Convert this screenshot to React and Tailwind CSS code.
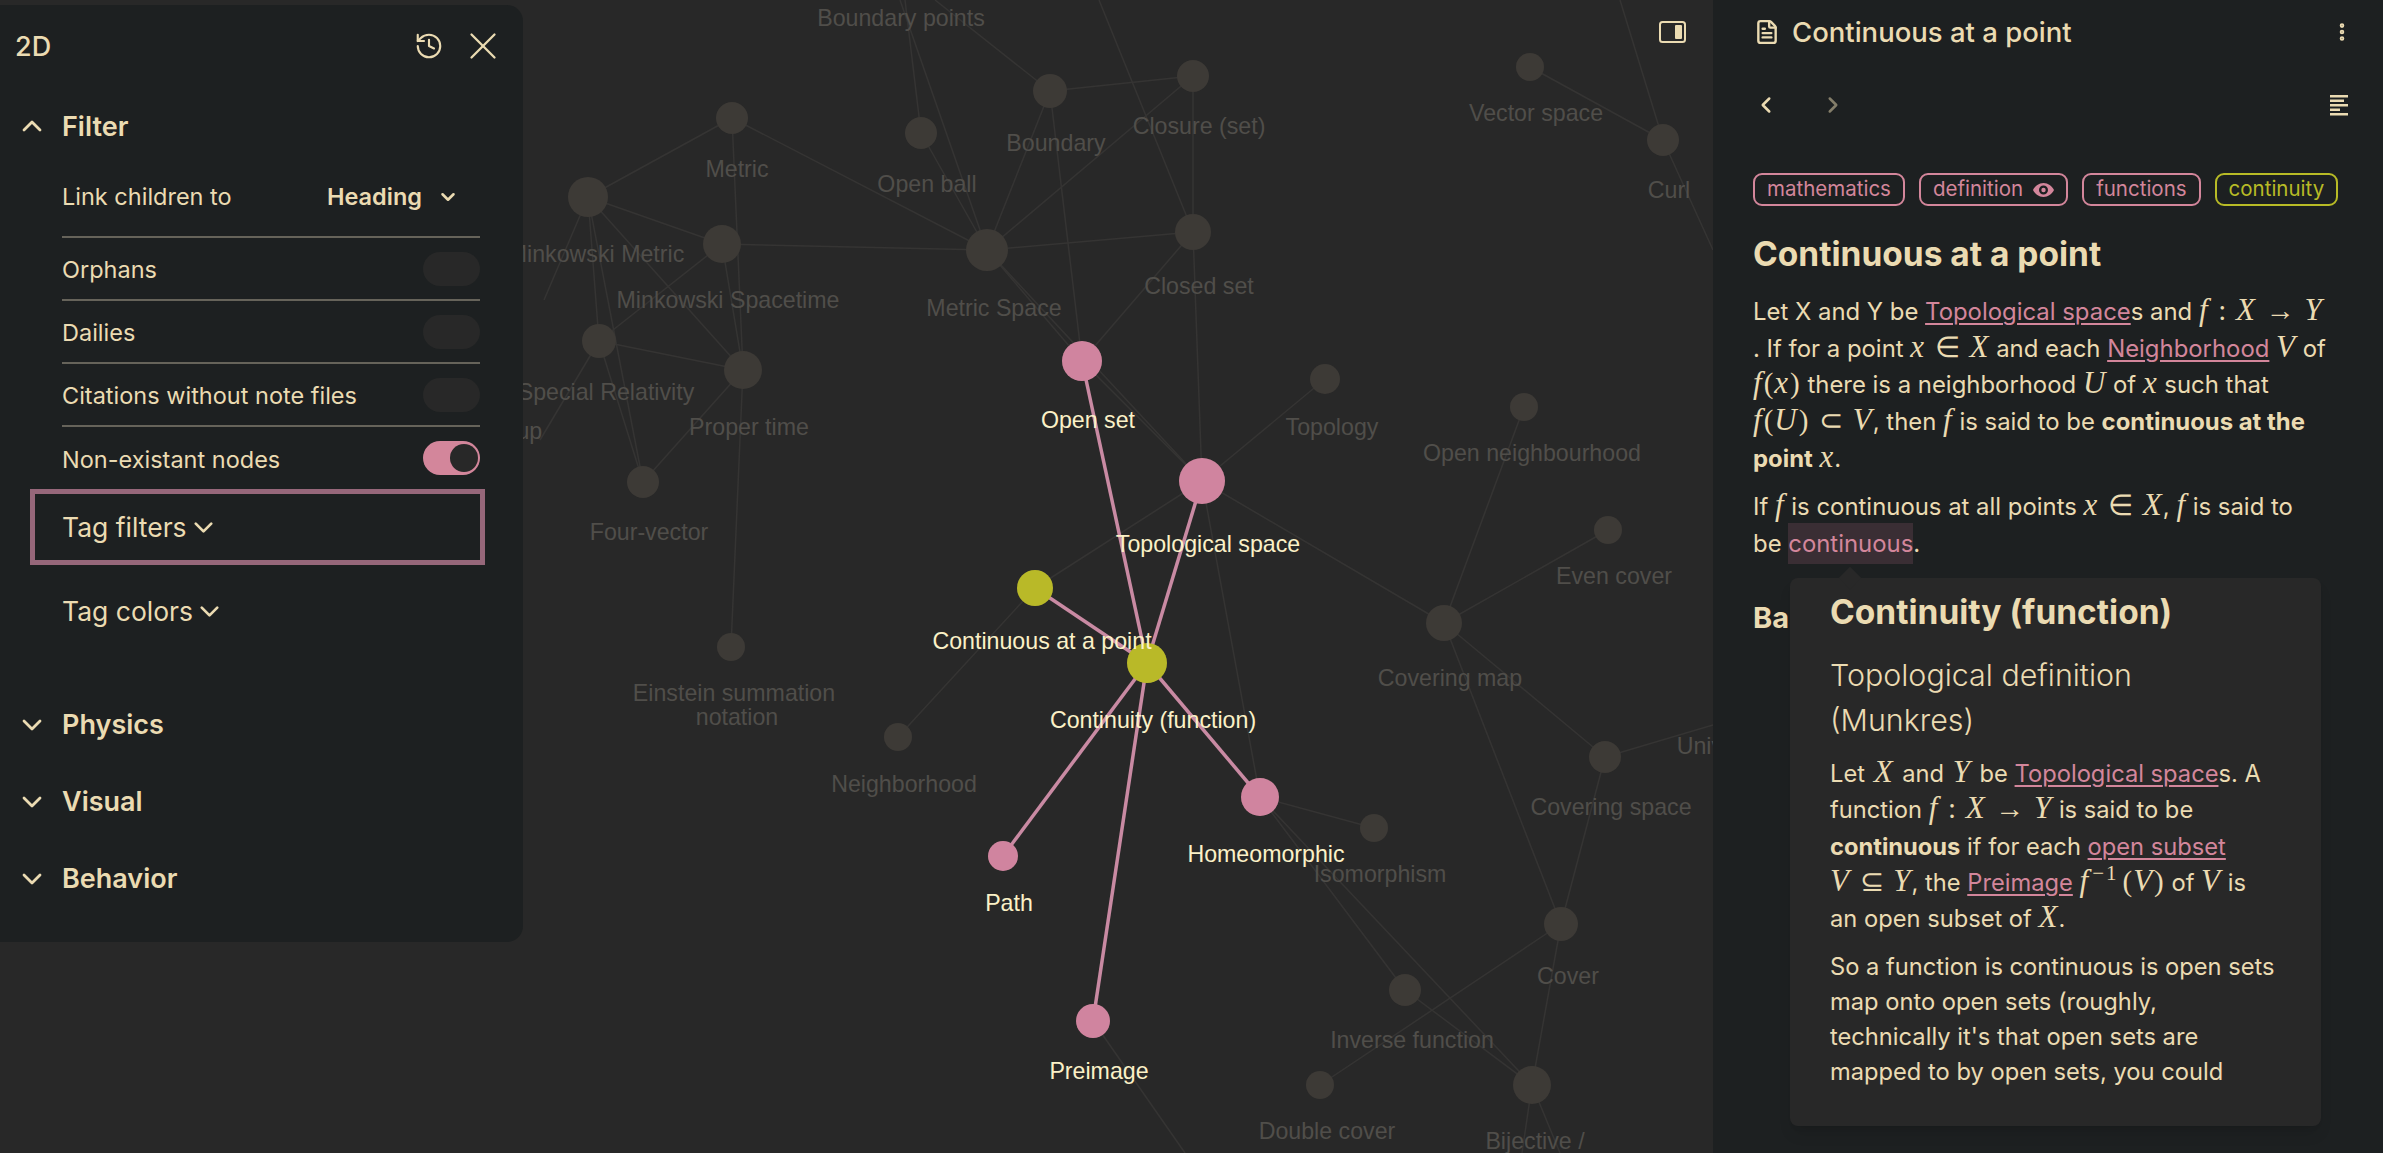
import {
    ChevronDown,
    ChevronLeft,
    ChevronRight,
    ChevronUp,
    EllipsisVertical,
    FileText,
    History,
    X,
} from 'lucide-react'

const nodes = {
    metric: [732, 118, 16],
    minkMetric: [588, 197, 20],
    minkSpace: [722, 244, 19],
    specialRel: [599, 341, 17],
    properTime: [743, 370, 19],
    fourVector: [643, 482, 16],
    einstein: [731, 647, 14],
    openBall: [921, 133, 16],
    boundary: [1050, 91, 17],
    closure: [1193, 76, 16],
    metricSpace: [987, 250, 21],
    closedSet: [1193, 232, 18],
    openSet: [1082, 361, 20],
    topSpace: [1202, 481, 23],
    topology: [1325, 379, 15],
    contPoint: [1035, 588, 18],
    continuity: [1147, 663, 20],
    neighborhood: [898, 737, 14],
    homeo: [1260, 797, 19],
    iso: [1374, 828, 14],
    path: [1003, 856, 15],
    preimage: [1093, 1021, 17],
    coveringMap: [1444, 623, 18],
    openNbhd: [1524, 407, 14],
    evenCover: [1608, 530, 14],
    coveringSpace: [1605, 757, 16],
    cover: [1561, 924, 17],
    inverse: [1405, 990, 16],
    doubleCover: [1320, 1085, 14],
    bijective: [1532, 1085, 19],
    vectorSpace: [1530, 67, 14],
    curl: [1663, 140, 16],
}

const pinkNodes = ['openSet', 'topSpace', 'homeo', 'path', 'preimage']
const limeNodes = ['contPoint', 'continuity']

const edges = [
    ['metric', 'minkMetric'], ['metric', 'metricSpace'], ['metric', 'properTime'],
    ['minkMetric', 'minkSpace'], ['minkMetric', 'specialRel'], ['minkMetric', 'properTime'],
    ['minkMetric', 'fourVector'], ['minkSpace', 'metricSpace'], ['minkSpace', 'specialRel'],
    ['minkSpace', 'properTime'], ['specialRel', 'properTime'], ['specialRel', 'fourVector'],
    ['properTime', 'fourVector'], ['properTime', 'einstein'], ['openBall', 'metricSpace'],
    ['boundary', 'closure'], ['boundary', 'metricSpace'], ['boundary', 'openSet'],
    ['closure', 'metricSpace'], ['closure', 'closedSet'], ['closedSet', 'metricSpace'],
    ['closedSet', 'openSet'], ['closedSet', 'topSpace'], ['metricSpace', 'openSet'],
    ['metricSpace', 'topSpace'], ['openSet', 'topSpace'], ['topology', 'topSpace'],
    ['topSpace', 'coveringMap'], ['topSpace', 'contPoint'], ['topSpace', 'homeo'],
    ['contPoint', 'neighborhood'], ['homeo', 'iso'], ['homeo', 'bijective'],
    ['homeo', 'inverse'], ['inverse', 'bijective'], ['cover', 'doubleCover'],
    ['cover', 'bijective'], ['cover', 'coveringSpace'], ['cover', 'coveringMap'],
    ['coveringMap', 'openNbhd'], ['coveringMap', 'evenCover'], ['coveringMap', 'coveringSpace'],
    ['vectorSpace', 'curl'],
]

// edges that run off the canvas
const looseEdges = [
    [905, 0, 921, 133], [900, 0, 987, 250], [935, 0, 1050, 91], [1099, 0, 1193, 232],
    [1620, 0, 1663, 140], [1663, 140, 1713, 250], [1605, 757, 1713, 725], [544, 300, 588, 197],
    [1532, 1085, 1522, 1153], [1532, 1085, 1560, 1153], [1093, 1021, 1185, 1153],
    [540, 440, 599, 341],
]

const pinkEdges = ['openSet', 'topSpace', 'contPoint', 'path', 'homeo', 'preimage']

const labels = [
    ['Boundary points', 901, 18], ['Metric', 737, 169], ['Minkowski Metric', 596, 254],
    ['Boundary', 1056, 143], ['Closure (set)', 1199, 126], ['Open ball', 927, 184],
    ['Metric Space', 994, 308], ['Closed set', 1199, 286], ['Minkowski Spacetime', 728, 300],
    ['Special Relativity', 606, 392], ['Proper time', 749, 427], ['Group', 510, 431],
    ['Four-vector', 649, 532], ['Einstein summation', 734, 693], ['notation', 737, 717],
    ['Neighborhood', 904, 784], ['Topology', 1332, 427], ['Open neighbourhood', 1532, 453],
    ['Even cover', 1614, 576], ['Covering map', 1450, 678], ['Covering space', 1611, 807],
    ['Isomorphism', 1380, 874], ['Cover', 1568, 976], ['Inverse function', 1412, 1040],
    ['Double cover', 1327, 1131], ['Bijective /', 1535, 1141], ['Vector space', 1536, 113],
    ['Curl', 1669, 190], ['Universal', 1725, 746],
]

const brightLabels = [
    ['Open set', 1088, 420], ['Topological space', 1208, 544], ['Continuous at a point', 1042, 641],
    ['Continuity (function)', 1153, 720], ['Homeomorphic', 1266, 854], ['Path', 1009, 903],
    ['Preimage', 1099, 1071],
]

function GraphCanvas() {
    return (
        <svg
            className="absolute inset-0 h-full w-full"
            viewBox="0 0 1713 1153"
            fontFamily="'Liberation Sans', Arial, sans-serif"
            fontSize="23.2"
            textAnchor="middle"
        >
            {edges.map(([a, b]) => (
                <line
                    key={a + b}
                    x1={nodes[a][0]}
                    y1={nodes[a][1]}
                    x2={nodes[b][0]}
                    y2={nodes[b][1]}
                    stroke="#353433"
                    strokeWidth="1.5"
                />
            ))}
            {looseEdges.map(([x1, y1, x2, y2]) => (
                <line key={`${x1}-${y1}-${x2}`} x1={x1} y1={y1} x2={x2} y2={y2} stroke="#353433" strokeWidth="1.5" />
            ))}
            {Object.entries(nodes).map(([name, [cx, cy, r]]) => (
                <circle key={name} cx={cx} cy={cy} r={r} fill="#3d3a36" />
            ))}
            {labels.map(([text, x, y]) => (
                <text key={text} x={x} y={y + 8} fill="#504e4a">{text}</text>
            ))}
            {pinkEdges.map((name) => (
                <line
                    key={name}
                    x1={nodes.continuity[0]}
                    y1={nodes.continuity[1]}
                    x2={nodes[name][0]}
                    y2={nodes[name][1]}
                    stroke="#c98aa3"
                    strokeWidth="3.5"
                />
            ))}
            {pinkNodes.map((name) => (
                <circle key={name} cx={nodes[name][0]} cy={nodes[name][1]} r={nodes[name][2]} fill="#d0849f" />
            ))}
            {limeNodes.map((name) => (
                <circle key={name} cx={nodes[name][0]} cy={nodes[name][1]} r={nodes[name][2]} fill="#b9b928" />
            ))}
            {brightLabels.map(([text, x, y]) => (
                <text key={text} x={x} y={y + 8} fill="#fbf1c7">{text}</text>
            ))}
        </svg>
    )
}

function Toggle({ on }) {
    return on ? (
        <div className="flex h-[34px] w-[57px] items-center justify-end rounded-full bg-[#d3869b] pr-[2px]">
            <div className="h-[28px] w-[28px] rounded-full bg-[#282828]" />
        </div>
    ) : (
        <div className="h-[34px] w-[57px] rounded-full bg-[#282828]" />
    )
}

function ToggleRow({ label, on, last }) {
    return (
        <div
            className={
                last
                    ? 'flex h-[62px] items-center justify-between'
                    : 'flex h-[63px] items-center justify-between border-b-2 border-[#66635a]'
            }
        >
            <span className="pt-[3px]">{label}</span>
            <Toggle on={on} />
        </div>
    )
}

function SectionRow({ label }) {
    return (
        <div className="flex h-[77px] items-center">
            <ChevronDown size={32} strokeWidth={2.1} className="ml-[16px]" />
            <span className="ml-[14px] pt-[1px] text-[27px] font-semibold">{label}</span>
        </div>
    )
}

function GraphPanel() {
    return (
        <div className="absolute left-0 top-[5px] h-[937px] w-[523px] rounded-r-2xl bg-[#1d2021] text-[23.5px]">
            <div className="flex h-[82px] items-center justify-between pl-[15px] pr-[17px]">
                <span className="pt-[2px] text-[27px] font-medium">2D</span>
                <div className="flex items-center gap-[16px]">
                    <History size={30} strokeWidth={1.7} />
                    <X size={46} strokeWidth={1.2} />
                </div>
            </div>
            <div className="flex h-[78px] items-center">
                <ChevronUp size={32} strokeWidth={2.1} className="ml-[16px]" />
                <span className="ml-[14px] pt-[2px] text-[27px] font-semibold">Filter</span>
            </div>
            <div className="ml-[62px] w-[418px]">
                <div className="flex h-[73px] items-center justify-between border-b-2 border-[#66635a] pb-[8px]">
                    <span>Link children to</span>
                    <div className="flex items-center gap-[15px] pr-[21px]">
                        <span className="font-semibold">Heading</span>
                        <ChevronDown size={22} strokeWidth={2.8} />
                    </div>
                </div>
                <ToggleRow label="Orphans" />
                <ToggleRow label="Dailies" />
                <ToggleRow label="Citations without note files" />
                <ToggleRow label="Non-existant nodes" on last />
            </div>
            <div className="ml-[30px] flex h-[76px] w-[455px] items-center gap-[1px] border-[5px] border-[#96677a] pl-[27px] text-[26.5px]">
                <span className="pt-[2px]">Tag filters</span>
                <ChevronDown size={31} strokeWidth={2.1} />
            </div>
            <div className="mt-[16px] flex h-[60px] items-center gap-[1px] pl-[62px] text-[26.5px]">
                <span className="pt-[2px]">Tag colors</span>
                <ChevronDown size={31} strokeWidth={2.1} />
            </div>
            <div className="mt-[45px]">
                <SectionRow label="Physics" />
                <SectionRow label="Visual" />
                <SectionRow label="Behavior" />
            </div>
        </div>
    )
}

function PanelToggleIcon() {
    return (
        <svg className="absolute right-[27px] top-[21px]" width="27" height="22" viewBox="0 0 27 22" fill="none">
            <rect x="1" y="1" width="25" height="20" rx="2.5" stroke="#ebdbb2" strokeWidth="2" />
            <rect x="16" y="4" width="7" height="14" rx="1" fill="#ebdbb2" />
        </svg>
    )
}

function OutlineIcon() {
    return (
        <svg width="20" height="21" viewBox="0 0 20 21" fill="#ebdbb2">
            <rect x="0" y="0" width="18" height="2.5" />
            <rect x="0" y="4.5" width="14" height="2.5" />
            <rect x="0" y="9" width="18" height="2.5" />
            <rect x="0" y="13.5" width="10" height="2.5" />
            <rect x="0" y="18" width="18" height="2.5" />
        </svg>
    )
}

function EyeFilled() {
    return (
        <svg width="21" height="14" viewBox="0 0 21 14" className="ml-[10px]">
            <path
                fillRule="evenodd"
                fill="#d3869b"
                d="M10.5 0C15 0 19 3 21 7c-2 4-6 7-10.5 7S2 11 0 7c2-4 6-7 10.5-7zm0 2.5a4.5 4.5 0 1 0 0 9 4.5 4.5 0 0 0 0-9z"
            />
            <circle cx="10.5" cy="7" r="2.2" fill="#d3869b" />
        </svg>
    )
}

function M({ children }) {
    return (
        <span className="font-['Liberation_Serif',serif] text-[31px] font-normal italic leading-none tracking-[1px]">
            {children}
        </span>
    )
}

function Mr({ children, rel }) {
    return (
        <span
            className={
                rel
                    ? "mx-[3px] font-['Liberation_Serif',serif] text-[29px] leading-none"
                    : "mx-[1px] font-['Liberation_Serif',serif] text-[29px] leading-none"
            }
        >
            {children}
        </span>
    )
}

function A({ children }) {
    return <span className="text-[#d3869b] underline decoration-2 underline-offset-[3px]">{children}</span>
}

function Tag({ children, lime }) {
    return (
        <span
            className={
                lime
                    ? 'flex h-[33px] items-center rounded-[9px] border-2 border-[#b8bb26] px-[12px] text-[20.5px] text-[#b8bb26]'
                    : 'flex h-[33px] items-center rounded-[9px] border-2 border-[#d3869b] px-[12px] text-[20.5px] text-[#d3869b]'
            }
        >
            {children}
        </span>
    )
}

function Popover() {
    return (
        <div className="absolute left-[77px] top-[578px] h-[548px] w-[531px] rounded-lg bg-[#282828] pl-[40px] pt-[12px] shadow-lg">
            <div className="absolute left-[52px] top-[-8px] h-[16px] w-[16px] rotate-45 bg-[#282828]" />
            <h3 className="relative text-[33.5px] font-bold leading-[44px]">Continuity (function)</h3>
            <p className="mt-[19px] text-[30.4px] font-light leading-[45px]">
                Topological definition
                <br />
                (Munkres)
            </p>
            <p className="mt-[13px] text-[23.7px] leading-[36.25px]">
                Let <span className="mx-[2px]"><M>X</M></span> and <span className="mx-[2px]"><M>Y</M></span> be <A>Topological space</A>s. A
                <br />
                function <M>f</M> <Mr rel>:</Mr> <M>X</M> <Mr rel>→</Mr> <M>Y</M> is said to be
                <br />
                <b>continuous</b> if for each <A>open subset</A>
                <br />
                <M>V</M> <Mr rel>⊆</Mr> <M>Y</M>, the <A>Preimage</A> <M>f</M>
                <sup className="mx-[3px] font-['Liberation_Serif',serif] text-[21px] leading-none tracking-[2px]">−1</sup>
                <Mr>(</Mr><M>V</M><Mr>)</Mr> of <M>V</M> is
                <br />
                an open subset of <M>X</M>.
            </p>
            <p className="mt-[12px] text-[23.7px] leading-[35px]">
                So a function is continuous is open sets
                <br />
                map onto open sets (roughly,
                <br />
                technically it's that open sets are
                <br />
                mapped to by open sets, you could
            </p>
        </div>
    )
}

function NoteSidebar() {
    return (
        <div className="relative h-full w-[670px] shrink-0 bg-[#1d2021]">
            <div className="flex h-[64px] items-center justify-between pl-[41px] pr-[30px]">
                <div className="flex items-center gap-[12px]">
                    <FileText size={26} strokeWidth={2.2} />
                    <span className="pt-[2px] text-[27.5px] font-medium">Continuous at a point</span>
                </div>
                <EllipsisVertical size={22} strokeWidth={3} />
            </div>
            <div className="flex h-[82px] items-center justify-between pl-[40px] pr-[33px]">
                <div className="flex items-center gap-[41px]">
                    <ChevronLeft size={26} strokeWidth={2.3} />
                    <ChevronRight size={26} strokeWidth={2.3} className="opacity-50" />
                </div>
                <OutlineIcon />
            </div>
            <div className="mt-[27px] flex gap-[14px] pl-[40px]">
                <Tag>mathematics</Tag>
                <Tag>
                    definition
                    <EyeFilled />
                </Tag>
                <Tag>functions</Tag>
                <Tag lime>continuity</Tag>
            </div>
            <div className="pl-[40px]">
                <h1 className="mt-[24px] text-[33.5px] font-bold leading-[48px]">Continuous at a point</h1>
                <p className="mt-[16px] text-[23.9px] leading-[36.67px]">
                    Let X and Y be <A>Topological space</A>s and <M>f</M> <Mr rel>:</Mr> <M>X</M> <Mr rel>→</Mr> <M>Y</M>
                    <br />
                    . If for a point <M>x</M> <Mr rel>∈</Mr> <M>X</M> and each <A>Neighborhood</A> <M>V</M> of
                    <br />
                    <M>f</M><Mr>(</Mr><M>x</M><Mr>)</Mr> there is a neighborhood <M>U</M> of <M>x</M> such that
                    <br />
                    <M>f</M><Mr>(</Mr><M>U</M><Mr>)</Mr> <Mr rel>⊂</Mr> <M>V</M>, then <M>f</M> is said to be <b>continuous at the</b>
                    <br />
                    <b>point</b> <M>x</M>.
                </p>
                <p className="mt-[12px] text-[23.9px] leading-[36.67px]">
                    If <M>f</M> is continuous at all points <M>x</M> <Mr rel>∈</Mr> <M>X</M>, <M>f</M> is said to
                    <br />
                    be <span className="bg-[#3a2e34] py-[6px] text-[#d3869b]">continuous</span>.
                </p>
                <h2 className="mt-[36px] text-[29px] font-bold leading-[38px]">Basics</h2>
            </div>
            <Popover />
        </div>
    )
}

export default function App() {
    return (
        <div className="flex h-[1153px] w-[2383px] overflow-hidden bg-[#282828] font-['Inter',sans-serif] text-[#ebdbb2]">
            <div className="relative h-full flex-1">
                <GraphCanvas />
                <GraphPanel />
                <PanelToggleIcon />
            </div>
            <NoteSidebar />
        </div>
    )
}
